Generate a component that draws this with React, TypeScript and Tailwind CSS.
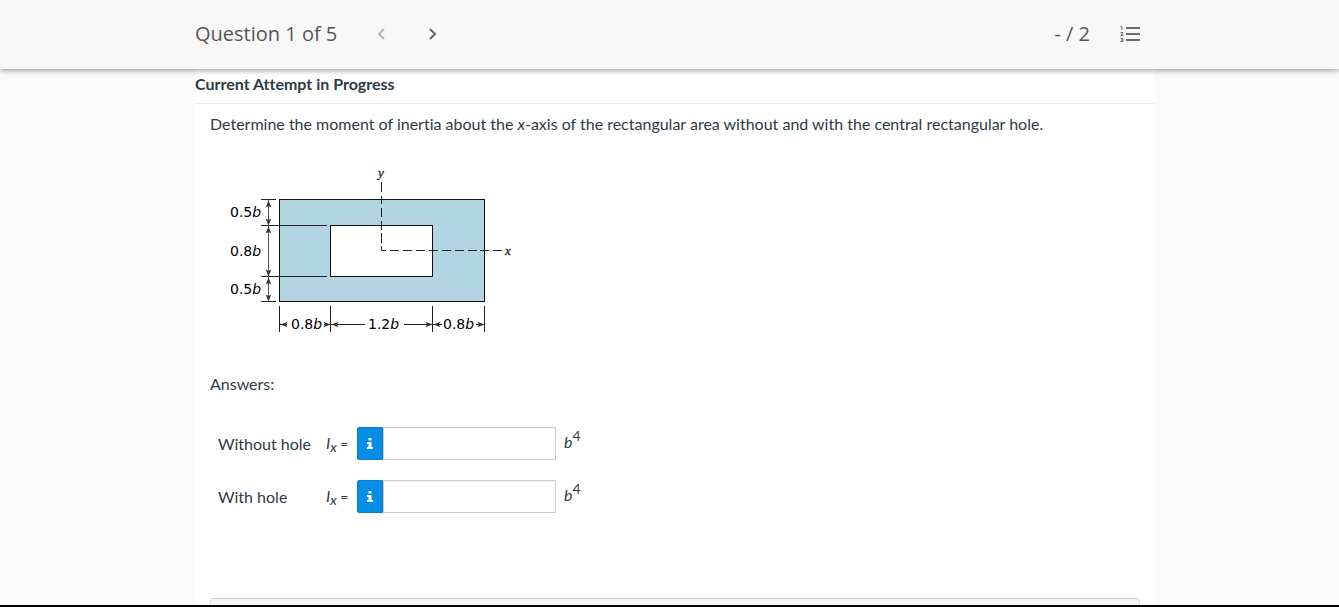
import { useState } from 'react';
import type { ReactNode } from 'react';

const answers = [
  { id: 'without-hole', label: 'Without hole' },
  { id: 'with-hole', label: 'With hole' },
];

// stroke arrow heads, one entry per tip: x, y, rotation
const arrows = [
  [58, 40, -90],
  [58, 65, 90],
  [58, 66, -90],
  [58, 116, 90],
  [58, 117, -90],
  [58, 141, 90],
  [70, 164, 180],
  [120, 164, 0],
  [121, 164, 180],
  [222, 164, 0],
  [223, 164, 180],
  [274, 164, 0],
];

function DimLabel({ x, y, children }: { x: number; y: number; children: ReactNode }) {
  return (
    <text x={x} y={y} fontSize="14" fill="#000" className="font-['DejaVu_Sans',sans-serif]">
      {children}
      <tspan fontStyle="italic">b</tspan>
    </text>
  );
}

function Figure() {
  return (
    <svg width="320" height="180" viewBox="0 0 320 180" role="img" aria-label="Rectangular area with central hole">
      <rect x="69.5" y="39.5" width="205" height="102" fill="#b3d4e3" stroke="#111" />
      <rect x="120.5" y="65.5" width="102" height="51" fill="#fff" stroke="#111" />

      <g stroke="#222" fill="none">
        <path d="M51 39.5H66M51 65.5H117M51 116.5H117M51 141.5H66" />
        <path d="M69.5 146V172M120.5 146V172M222.5 146V172M274.5 146V172" />
        <path d="M58.5 40V141" stroke="#555" />
        <path d="M70 164.5H77M114 164.5H155M194 164.5H232M266 164.5H274" />
        <path d="M171.5 22V32M171.5 36V44M171.5 48V57M171.5 61V70M171.5 73V83M171.5 86V90.5H176" />
        <path d="M180 90.5H189M193 90.5H202M206 90.5H215M219 90.5H228M232 90.5H241M245 90.5H254M258 90.5H267M270 90.5H279M283 90.5H292" />
      </g>

      {arrows.map(([x, y, angle]) => (
        <path
          key={`${x}-${y}-${angle}`}
          d="M0 0L-7 -2.8L-5.4 0L-7 2.8Z"
          fill="#333"
          transform={`translate(${x + 0.5} ${y + 0.5}) rotate(${angle})`}
        />
      ))}

      <DimLabel x={20} y={57}>0.5</DimLabel>
      <DimLabel x={20} y={96}>0.8</DimLabel>
      <DimLabel x={20} y={134}>0.5</DimLabel>
      <DimLabel x={81} y={169}>0.8</DimLabel>
      <DimLabel x={158} y={169}>1.2</DimLabel>
      <DimLabel x={233} y={169}>0.8</DimLabel>

      <g fontSize="13" fontStyle="italic" fill="#222" stroke="#222" strokeWidth="0.3" className="font-['Liberation_Serif',serif]">
        <text x="168" y="17">y</text>
        <text x="295" y="95">x</text>
      </g>
    </svg>
  );
}

function ListIcon() {
  return (
    <svg width="20" height="18" viewBox="0 0 20 18" aria-hidden="true">
      <path d="M6 2h14v2H6zM6 8h14v2H6zM6 14h14v2H6z" fill="#6b6b6b" />
      <path
        d="M.5 1.5h1.5V5M.5 7.5h2.5v1L1 10v.5h2.5M.5 13.5h2.5v3H.5M1 15h2"
        fill="none"
        stroke="#6b6b6b"
      />
    </svg>
  );
}

function Header() {
  return (
    <header className="relative z-10 bg-[#f8f8f8] pl-[11px] shadow-[0_1px_6px_rgba(0,0,0,0.45)]">
      <div className="mx-auto flex h-[69px] max-w-[960px] items-center pb-0.5 font-['Open_Sans',sans-serif] text-xl text-[#555]">
        <h1>Question 1 of 5</h1>
        <nav className="ml-[34px] flex gap-8">
          <button type="button" aria-label="Previous question" disabled className="flex h-5 w-5 items-center justify-center text-[#b5b5b5]">
            <svg width="8" height="12" viewBox="0 0 8 12" fill="none" stroke="currentColor" strokeWidth="2">
              <path d="M7 1L2 6l5 5" />
            </svg>
          </button>
          <button type="button" aria-label="Next question" className="flex h-5 w-5 items-center justify-center text-[#666]">
            <svg width="8" height="12" viewBox="0 0 8 12" fill="none" stroke="currentColor" strokeWidth="2">
              <path d="M1 1l5 5-5 5" />
            </svg>
          </button>
        </nav>
        <span className="ml-auto">- / 2</span>
        <button type="button" aria-label="Question list" className="mr-[15px] ml-[30px]">
          <ListIcon />
        </button>
      </div>
    </header>
  );
}

export default function App() {
  const [values, setValues] = useState<Record<string, string>>({});

  return (
    <div className="flex h-screen flex-col overflow-hidden border-b-2 border-black bg-[#fafafa] font-[Lato,sans-serif] text-base text-[#2d3b45] [font-variant-ligatures:none]">
      <Header />
      <main className="min-h-0 flex-1 overflow-hidden pl-[11px]">
        <div className="mx-auto min-h-full max-w-[960px] bg-white">
          <h2 className="border-b border-[#ececec] pt-[3px] pb-[7px] font-bold">Current Attempt in Progress</h2>
          <div className="px-[15px] pt-2">
            <p>
              Determine the moment of inertia about the <i>x</i>-axis of the rectangular area without and with the central
              rectangular hole.
            </p>
            <div className="mt-6">
              <Figure />
            </div>
            <p className="mt-8">Answers:</p>

            <div className="mt-[31px] flex flex-col gap-5 pl-2">
              {answers.map(({ id, label }) => (
                <div key={id} className="flex h-[33px] items-center">
                  <label htmlFor={id} className="w-[108px]">{label}</label>
                  <span className="w-[31px] pb-0.5 text-sm whitespace-nowrap">
                    <i className="text-base">I<sub className="text-sm">x</sub></i> =
                  </span>
                  <button
                    type="button"
                    aria-label={`Help for ${label}`}
                    className="flex h-[33px] w-[26px] items-center justify-center rounded-l-xs border border-[#0a7fd0] bg-[#058ee6]"
                  >
                    <svg width="6" height="11" viewBox="0 0 6 11" fill="#fff">
                      <path d="M1.5 0h3v2.4h-3zM0 4h4.5v5H6v2H0V9h1.5V6H0z" />
                    </svg>
                  </button>
                  <input
                    id={id}
                    type="text"
                    value={values[id] ?? ''}
                    onChange={(e) => setValues({ ...values, [id]: e.target.value })}
                    className="h-[33px] w-[173px] border border-[#ccc] bg-white px-2 shadow-[inset_0_1px_1px_rgba(0,0,0,0.075)] outline-none"
                  />
                  <span className="ml-2 pb-1">
                    <i>b</i>
                    <sup className="text-sm">4</sup>
                  </span>
                </div>
              ))}
            </div>

            <div className="mt-[85px] h-12 rounded-sm border border-[#ddd] border-t-[#ccc] bg-[#f5f5f5]" />
          </div>
        </div>
      </main>
    </div>
  );
}
